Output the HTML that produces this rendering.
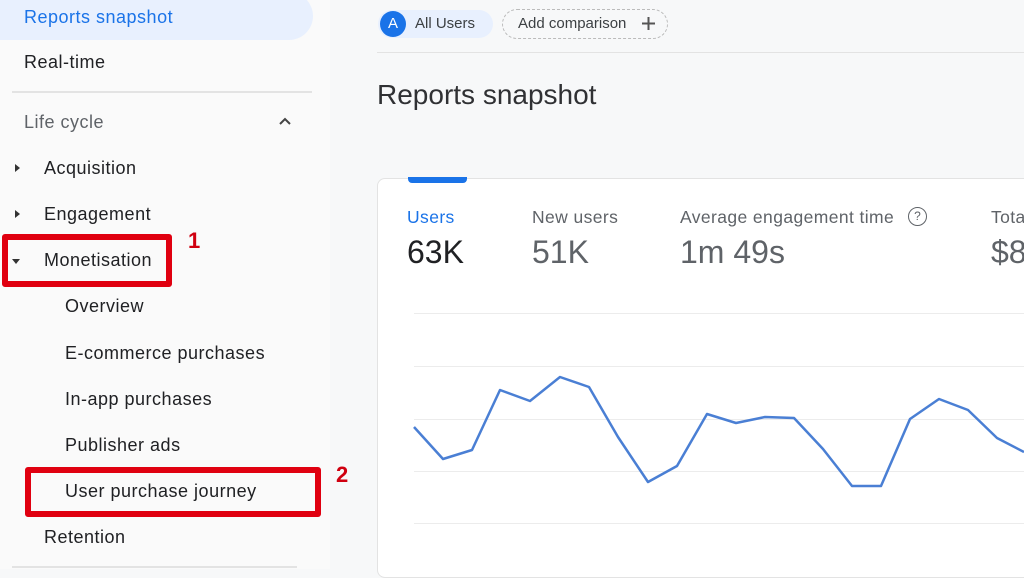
<!DOCTYPE html>
<html><head><meta charset="utf-8"><style>
*{margin:0;padding:0;box-sizing:border-box}
body{width:1024px;height:569px;overflow:hidden;background:#f7f8f9;font-family:"Liberation Sans",sans-serif;position:relative;color:#202124}
.sb{position:absolute;left:0;top:0;width:330px;height:569px;background:#fafafa}
.t{position:absolute;font-size:18px;letter-spacing:0.5px;white-space:nowrap}
.m{letter-spacing:0.4px;font-size:17.5px}
.n{letter-spacing:0}
.sel{position:absolute;left:0;top:-8px;width:313px;height:48px;background:#e8f0fe;border-radius:0 24px 24px 0}
.hr{position:absolute;height:2px;background:#e3e3e3}
.box{position:absolute;border:6px solid #e00010;border-radius:3px}
.num{position:absolute;color:#d00010;font-weight:bold;font-size:22px}
.tri{position:absolute;width:0;height:0}
.card{position:absolute;left:377px;top:178px;width:660px;height:400px;background:#fff;border:1px solid #e3e3e3;border-radius:8px}
.grid{position:absolute;left:414px;width:610px;height:1px;background:#ececec}
</style></head><body>
<div class="sb"></div>
<div class="sel"></div>
<div class="t" style="left:24px;top:7px;color:#1a73e8;font-size:18px">Reports snapshot</div>
<div class="t" style="left:24px;top:52px">Real-time</div>
<div class="hr" style="left:12px;top:91px;width:300px"></div>
<div class="t" style="left:24px;top:112px;color:#5f6368">Life cycle</div>
<svg style="position:absolute;left:278px;top:116px" width="14" height="10"><path d="M2 8 L7 3 L12 8" stroke="#444" stroke-width="2" fill="none"/></svg>
<div class="tri" style="left:15px;top:164px;border-left:5px solid #333;border-top:4px solid transparent;border-bottom:4px solid transparent"></div>
<div class="t" style="left:44px;top:158px">Acquisition</div>
<div class="tri" style="left:15px;top:210px;border-left:5px solid #333;border-top:4px solid transparent;border-bottom:4px solid transparent"></div>
<div class="t" style="left:44px;top:204px">Engagement</div>
<div class="tri" style="left:12px;top:259px;border-top:5px solid #333;border-left:4px solid transparent;border-right:4px solid transparent"></div>
<div class="t" style="left:44px;top:250px">Monetisation</div>
<div class="box" style="left:2px;top:234px;width:170px;height:53px"></div>
<div class="num" style="left:188px;top:228px">1</div>
<div class="t" style="left:65px;top:296px">Overview</div>
<div class="t" style="left:65px;top:343px">E-commerce purchases</div>
<div class="t" style="left:65px;top:389px">In-app purchases</div>
<div class="t" style="left:65px;top:435px">Publisher ads</div>
<div class="t" style="left:65px;top:481px">User purchase journey</div>
<div class="box" style="left:25px;top:467px;width:296px;height:50px"></div>
<div class="num" style="left:336px;top:462px">2</div>
<div class="t" style="left:44px;top:527px">Retention</div>
<div class="hr" style="left:12px;top:566px;width:285px"></div>

<div style="position:absolute;left:378px;top:10px;width:115px;height:28px;background:#e8f0fe;border-radius:14px"></div>
<div style="position:absolute;left:380px;top:11px;width:26px;height:26px;border-radius:50%;background:#1a73e8;color:#fff;font-size:15px;text-align:center;line-height:26px">A</div>
<div class="t n" style="left:415px;top:15px;font-size:15px;color:#3c4043">All Users</div>
<div style="position:absolute;left:502px;top:9px;width:166px;height:30px;border:1.5px dashed #bbb;border-radius:15px"></div>
<div class="t n" style="left:518px;top:15px;font-size:15px;color:#3c4043">Add comparison</div>
<svg style="position:absolute;left:641px;top:16px" width="15" height="15"><path d="M7.5 1V14M1 7.5H14" stroke="#555" stroke-width="2"/></svg>
<div class="hr" style="left:377px;top:52px;width:647px;height:1px"></div>
<div class="t n" style="left:377px;top:79px;font-size:28px;color:#303134">Reports snapshot</div>

<div class="card"></div>
<div style="position:absolute;left:408px;top:177px;width:59px;height:6px;background:#1a73e8;border-radius:0 0 4px 4px"></div>
<div class="t m" style="left:407px;top:207px;color:#1a73e8">Users</div>
<div class="t n" style="left:407px;top:234px;font-size:32px;color:#202124">63K</div>
<div class="t m" style="left:532px;top:207px;color:#5f6368">New users</div>
<div class="t n" style="left:532px;top:234px;font-size:32px;color:#5f6368">51K</div>
<div class="t m" style="left:680px;top:207px;color:#5f6368">Average engagement time</div>
<div style="position:absolute;left:908px;top:207px;width:19px;height:19px;border:1.6px solid #5f6368;border-radius:50%;font-size:12px;text-align:center;line-height:16px;color:#5f6368">?</div>
<div class="t n" style="left:680px;top:234px;font-size:32px;color:#5f6368">1m 49s</div>
<div class="t m" style="left:991px;top:207px;color:#5f6368">Total</div>
<div class="t n" style="left:991px;top:234px;font-size:32px;color:#5f6368">$8</div>
<div class="grid" style="top:313px"></div>
<div class="grid" style="top:366px"></div>
<div class="grid" style="top:419px"></div>
<div class="grid" style="top:471px"></div>
<div class="grid" style="top:523px"></div>
<svg style="position:absolute;left:0;top:0" width="1024" height="569"><polyline fill="none" stroke="#4a7fd4" stroke-width="2.5" stroke-linejoin="round" points="414,427 443,459 472,450 500,390 530,401 560,377 589,387 618,437 648,482 677,466 707,414 736,423 765,417 794,418 823,449 852,486 881,486 910,419 939,399 968,410 997,438 1024,452"/></svg>
</body></html>
